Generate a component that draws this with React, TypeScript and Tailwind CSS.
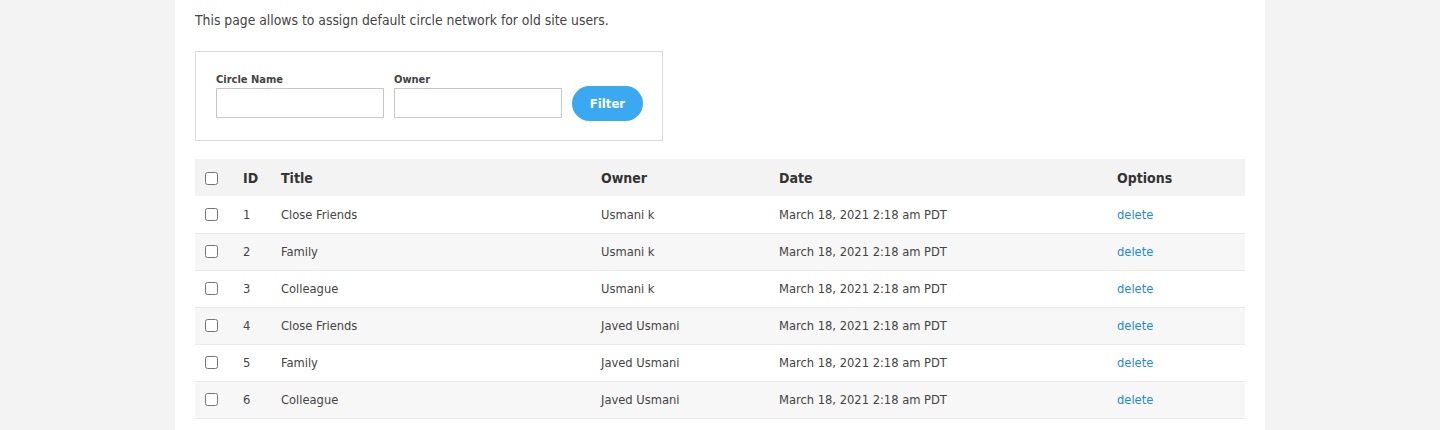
import React from "react";

type Circle = { id: number; title: string; owner: string; date: string };

const circles: Circle[] = [
  { id: 1, title: "Close Friends", owner: "Usmani k", date: "March 18, 2021 2:18 am PDT" },
  { id: 2, title: "Family", owner: "Usmani k", date: "March 18, 2021 2:18 am PDT" },
  { id: 3, title: "Colleague", owner: "Usmani k", date: "March 18, 2021 2:18 am PDT" },
  { id: 4, title: "Close Friends", owner: "Javed Usmani", date: "March 18, 2021 2:18 am PDT" },
  { id: 5, title: "Family", owner: "Javed Usmani", date: "March 18, 2021 2:18 am PDT" },
  { id: 6, title: "Colleague", owner: "Javed Usmani", date: "March 18, 2021 2:18 am PDT" },
];

const Field = ({ label }: { label: string }) => (
  <div className="flex flex-col">
    <label className="text-[11px] leading-[14px] font-bold text-[#444] mb-[1px] pt-[1px]">{label}</label>
    <input type="text" className="w-[168px] h-[30px] border border-[#c8c8c8] bg-white outline-none px-2 text-[13px]" />
  </div>
);

const App = () => {
  return (
    <div className="min-h-screen bg-[#f3f3f3] font-['DejaVu_Sans_Condensed','DejaVu_Sans',sans-serif]">
      <div className="ml-[175px] w-[1090px] min-h-[430px] bg-white px-5">
        <p className="pt-[10px] text-[13.8px] leading-[20px] text-[#444]">
          This page allows to assign default circle network for old site users.
        </p>

        <div className="mt-[21px] w-[468px] border border-[#dcdcdc] px-5 pt-5 pb-[22px]">
          <div className="flex gap-[10px]">
            <Field label="Circle Name" />
            <Field label="Owner" />
            <div className="self-end h-[30px] flex items-center">
              <button className="h-[35px] w-[71px] rounded-full bg-[#3ba9f1] text-white text-[13px] font-bold pt-[1px]">
                Filter
              </button>
            </div>
          </div>
        </div>

        <table className="mt-[18px] w-[1050px] table-fixed border-collapse text-[12.8px] text-[#444]">
          <colgroup>
            <col className="w-[48px]" />
            <col className="w-[38px]" />
            <col className="w-[320px]" />
            <col className="w-[178px]" />
            <col className="w-[338px]" />
            <col />
          </colgroup>
          <thead>
            <tr className="h-[37px] bg-[#f3f3f3] text-left text-[14px] text-[#333]">
              <th className="pl-[10px] align-middle">
                <input type="checkbox" className="block mt-[2px]" />
              </th>
              <th className="font-bold pt-[2px]">ID</th>
              <th className="font-bold pt-[2px]">Title</th>
              <th className="font-bold pt-[2px]">Owner</th>
              <th className="font-bold pt-[2px]">Date</th>
              <th className="font-bold pt-[2px]">Options</th>
            </tr>
          </thead>
          <tbody>
            {circles.map((c, i) => (
              <tr key={c.id} className={`h-[37px] border-b border-[#e9e9e9] ${i % 2 === 1 ? "bg-[#f7f7f7]" : "bg-white"}`}>
                <td className="pl-[10px] align-middle">
                  <input type="checkbox" className="block" />
                </td>
                <td>{c.id}</td>
                <td>{c.title}</td>
                <td>{c.owner}</td>
                <td>{c.date}</td>
                <td>
                  <a href="#" className="text-[#1f8ad2]">delete</a>
                </td>
              </tr>
            ))}
          </tbody>
        </table>
      </div>
    </div>
  );
};

export default App;
